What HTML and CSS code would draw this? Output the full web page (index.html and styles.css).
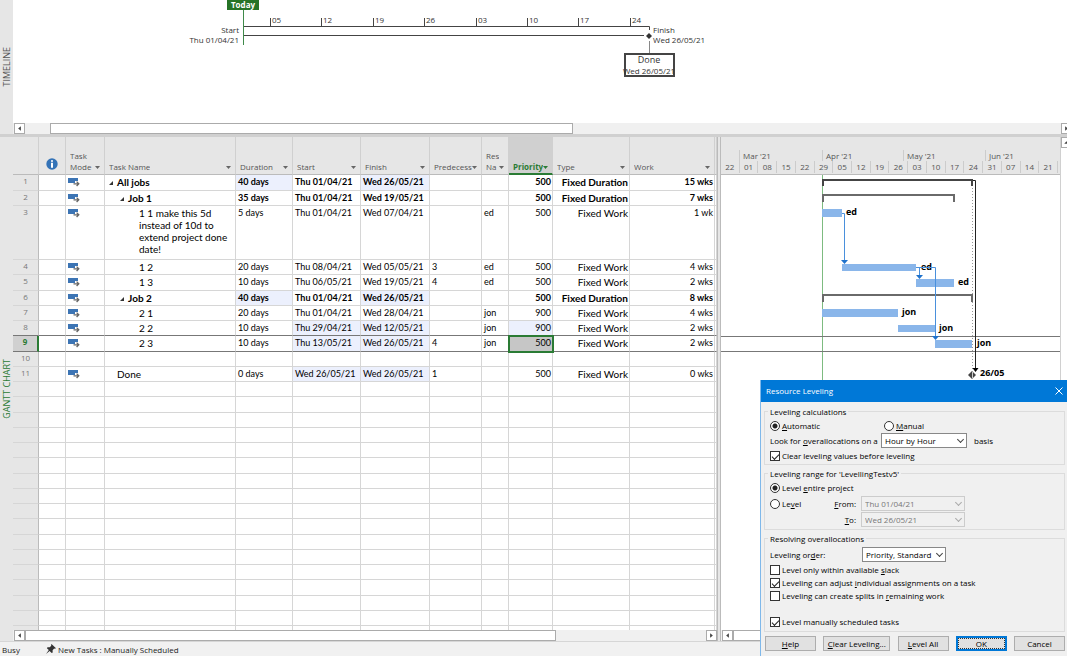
FILE: index.html
```html
<!DOCTYPE html>
<html lang="en">
<head>
    <meta charset="UTF-8">
    <meta name="viewport" content="width=device-width, initial-scale=1.0">
    <title>Project - Gantt Chart</title>
    <link rel="stylesheet" href="styles.css">
</head>
<body>
    <svg class="defs" aria-hidden="true">
        <symbol id="icon-mode" viewBox="0 0 12 10">
            <path fill="#3c74b4" d="M0 1h10v3H7v2H0z"/>
            <path fill="none" stroke="#666" stroke-width="1.3" d="M5.5 6.8h5M8.6 4.6l2.2 2.2-2.2 2.2"/>
        </symbol>
        <symbol id="icon-info" viewBox="0 0 12 12">
            <circle cx="6" cy="6" r="5.7" fill="#3473b7"/>
            <path fill="#fff" d="M5 2.2h2v1.6H5zM5 4.8h2v5H5z"/>
        </symbol>
        <symbol id="icon-left" viewBox="0 0 10 10"><path fill="#444" d="M6.5 2.5v5L3.5 5z"/></symbol>
        <symbol id="icon-right" viewBox="0 0 10 10"><path fill="#444" d="M3.5 2.5v5l3-2.5z"/></symbol>
        <symbol id="icon-up" viewBox="0 0 10 10"><path fill="#444" d="M2.5 6.5h5L5 3.5z"/></symbol>
    </svg>

    <div class="app">
        <section class="timeline">
            <div class="side-label"><span>TIMELINE</span></div>
            <div class="timeline-main">
                <svg class="timeline-canvas" id="timeline">
                    <rect x="214" y="0" width="32" height="10" fill="#267326"/>
                    <text class="today" x="230" y="8">Today</text>
                    <path class="rule" d="M230 26.5H636.5V30M230 35.5H631"/>
                    <path class="rule green" d="M230.5 10V45"/>
                    <g id="ticks"></g>
                    <text x="226" y="33" text-anchor="end">Start</text>
                    <text x="226" y="43" text-anchor="end">Thu 01/04/21</text>
                    <path fill="#333" d="M636 33l3 3-3 3-3-3z"/>
                    <text x="640" y="33">Finish</text>
                    <text x="640" y="43">Wed 26/05/21</text>
                    <path class="rule thin" d="M636.5 41V53"/>
                    <rect class="done-box" x="612" y="54" width="49" height="22"/>
                    <text class="done" x="636" y="63">Done</text>
                    <text x="636" y="74" text-anchor="middle">Wed 26/05/21</text>
                </svg>
                <div class="hscroll">
                    <button type="button" class="arrow" aria-label="Scroll left"><svg><use href="#icon-left"/></svg></button>
                    <div class="track"><div class="thumb thumb-timeline"></div></div>
                    <button type="button" class="arrow" aria-label="Scroll right"><svg><use href="#icon-right"/></svg></button>
                </div>
            </div>
        </section>

        <section class="main">
            <div class="side-label side-green"><span>GANTT CHART</span></div>

            <div class="sheet">
                <div class="sheet-body">
                    <table>
                        <colgroup>
                            <col class="c-num"><col class="c-info"><col class="c-mode"><col class="c-name">
                            <col class="c-dur"><col class="c-start"><col class="c-finish"><col class="c-pred">
                            <col class="c-res"><col class="c-pri"><col class="c-type"><col class="c-work"><col>
                        </colgroup>
                        <thead>
                            <tr>
                                <th></th>
                                <th><svg class="info"><use href="#icon-info"/></svg></th>
                                <th><div class="head"><span>Task Mode</span><button type="button" aria-label="Task Mode menu"></button></div></th>
                                <th><div class="head"><span>Task Name</span><button type="button" aria-label="Task Name menu"></button></div></th>
                                <th><div class="head"><span>Duration</span><button type="button" aria-label="Duration menu"></button></div></th>
                                <th><div class="head"><span>Start</span><button type="button" aria-label="Start menu"></button></div></th>
                                <th><div class="head"><span>Finish</span><button type="button" aria-label="Finish menu"></button></div></th>
                                <th><div class="head"><span>Predecess</span><button type="button" aria-label="Predecessors menu"></button></div></th>
                                <th><div class="head"><span>Res<br>Na</span><button type="button" aria-label="Resource Names menu"></button></div></th>
                                <th class="active"><div class="head"><span>Priority</span><button type="button" aria-label="Priority menu"></button></div></th>
                                <th><div class="head"><span>Type</span><button type="button" aria-label="Type menu"></button></div></th>
                                <th><div class="head"><span>Work</span><button type="button" aria-label="Work menu"></button></div></th>
                                <th></th>
                            </tr>
                        </thead>
                        <tbody id="tasks"></tbody>
                    </table>
                </div>
                <div class="hscroll">
                    <button type="button" class="arrow" aria-label="Scroll left"><svg><use href="#icon-left"/></svg></button>
                    <div class="track"><div class="thumb thumb-sheet"></div></div>
                    <button type="button" class="arrow" aria-label="Scroll right"><svg><use href="#icon-right"/></svg></button>
                </div>
            </div>

            <div class="splitter"></div>

            <div class="gantt">
                <div class="scale">
                    <div class="months"><span></span><span>Mar '21</span><span>Apr '21</span><span>May '21</span><span>Jun '21</span></div>
                    <div class="weeks" id="weeks"></div>
                </div>
                <svg class="chart">
                    <path class="today-line" d="M101.5 0V500"/>
                    <path class="selected-line" d="M0 161.5H340M0 176.5H340"/>
                    <path class="dotted" d="M251.5 4V196"/>
                    <g class="summary">
                        <path class="dark" d="M102 11V5H251V11"/>
                        <path d="M102 27V20H233V27"/>
                        <path d="M102 127V120H251V127"/>
                    </g>
                    <g class="bars">
                        <rect x="101" y="34" width="20" height="8"/>
                        <rect x="121" y="89" width="74" height="7"/>
                        <rect x="195" y="104" width="38" height="8"/>
                        <rect x="101" y="134" width="76" height="8"/>
                        <rect x="177" y="150" width="37" height="7"/>
                        <rect x="214" y="165" width="37" height="8"/>
                    </g>
                    <g class="labels">
                        <text x="125" y="40">ed</text>
                        <text x="200" y="95">ed</text>
                        <text x="237" y="110">ed</text>
                        <text x="181" y="140">jon</text>
                        <text x="218" y="156">jon</text>
                        <text x="256" y="171">jon</text>
                        <text x="259" y="201">26/05</text>
                    </g>
                    <path class="link" d="M121 38.5H123.5V86M195 92.5H214.5V162M198.5 92.5V101"/>
                    <path class="link-head" d="M120 85h7l-3.5 4zM195 100h7l-3.5 4zM211 161h7l-3.5 4z"/>
                    <path class="link-end" d="M252 5.5H254.5V194"/>
                    <path d="M251.5 193h6l-3 4z"/>
                    <path fill="#444" d="M251 196l4 4-4 4-4-4z"/>
                    <path stroke="#ccc" d="M251.5 197V203"/>
                </svg>
                <div class="hscroll">
                    <button type="button" class="arrow" aria-label="Scroll left"><svg><use href="#icon-left"/></svg></button>
                    <div class="track"><div class="thumb thumb-gantt"></div></div>
                </div>
            </div>

            <div class="vscroll">
                <button type="button" class="arrow" aria-label="Scroll up"><svg><use href="#icon-up"/></svg></button>
            </div>
        </section>

        <footer class="status">
            <span class="state">Busy</span>
            <svg viewBox="0 0 10 10"><path fill="#333" d="M5.5 0L10 4.2 8.8 4.8 8.2 4.6 6.6 6.3 6.7 8.5 5.7 9 3.6 6.9 0 10 2.8 6.1.9 4.2 1.5 3.2 3.7 3.3 5.3 1.7 5 1z"/></svg>
            <span>New Tasks : Manually Scheduled</span>
        </footer>
    </div>

    <form class="dialog" role="dialog" aria-labelledby="dialog-title">
        <div class="dialog-title">
            <span id="dialog-title">Resource Leveling</span>
            <button type="button" aria-label="Close"><svg viewBox="0 0 8 8"><path stroke="#fff" d="M.5.5l7 7M7.5.5l-7 7"/></svg></button>
        </div>
        <div class="dialog-body">
            <fieldset class="calc">
                <legend>Leveling calculations</legend>
                <div class="line">
                    <label class="half"><input type="radio" name="mode" checked><u>A</u>utomatic</label>
                    <label><input type="radio" name="mode"><u>M</u>anual</label>
                </div>
                <div class="line">
                    <label class="look" for="basis">Look for <u>o</u>verallocations on a</label>
                    <span class="pick w-basis"><select id="basis"><option>Hour by Hour</option></select></span>
                    <span class="basis">basis</span>
                </div>
                <div class="line"><label><input type="checkbox" checked>Clear levelin<u>g</u> values before leveling</label></div>
            </fieldset>

            <fieldset class="range">
                <legend>Leveling range for 'LevellingTestv5'</legend>
                <div class="line"><label><input type="radio" name="range" checked>Level <u>e</u>ntire project</label></div>
                <div class="line">
                    <label><input type="radio" name="range">Le<u>v</u>el</label>
                    <label class="date-label" for="from"><u>F</u>rom:</label>
                    <span class="pick w-date off"><select id="from" disabled><option>Thu 01/04/21</option></select></span>
                </div>
                <div class="line">
                    <label class="date-label" for="to"><u>T</u>o:</label>
                    <span class="pick w-date off"><select id="to" disabled><option>Wed 26/05/21</option></select></span>
                </div>
            </fieldset>

            <fieldset class="resolve">
                <legend>Resolving overallocations</legend>
                <div class="line order">
                    <label class="order-label" for="order">Leveling or<u>d</u>er:</label>
                    <span class="pick w-order"><select id="order"><option>Priority, Standard</option></select></span>
                </div>
                <div class="line"><label><input type="checkbox">Level only within available <u>s</u>lack</label></div>
                <div class="line"><label><input type="checkbox" checked>Leveling can adjust <u>i</u>ndividual assignments on a task</label></div>
                <div class="line"><label><input type="checkbox">Leveling can create splits in <u>r</u>emaining work</label></div>
                <div class="line last"><label><input type="checkbox" checked>Level manually scheduled tasks</label></div>
            </fieldset>

            <div class="buttons">
                <button type="button"><u>H</u>elp</button>
                <button type="button" class="wide"><u>C</u>lear Leveling...</button>
                <button type="button"><u>L</u>evel All</button>
                <button type="button" class="default">OK</button>
                <button type="button">Cancel</button>
            </div>
        </div>
    </form>

    <script src="script.js"></script>
</body>
</html>
```

FILE: styles.css
```css
* {
    box-sizing: border-box;
}

body {
    margin: 0;
    height: 100vh;
    overflow: hidden;
    font-family: "Open Sans", "Noto Sans", sans-serif;
    font-size: 8px;
    color: #222;
    background: #fff;
}

button {
    font: inherit;
    color: inherit;
    margin: 0;
    padding: 0;
}

.defs {
    display: none;
}

.app {
    display: flex;
    flex-direction: column;
    height: 100vh;
}

.side-label {
    flex: 0 0 13px;
    display: flex;
    align-items: center;
    justify-content: center;
    background: #e6e6e6;
    color: #555;
    font-size: 9px;
}

.side-label span {
    writing-mode: vertical-rl;
    transform: rotate(180deg);
    line-height: 12px;
}

.side-green {
    color: #2a7b34;
}

/* timeline */

.timeline {
    display: flex;
    height: 137px;
    border-bottom: 3px solid #d0d0d0;
}

.timeline-main {
    flex: 1;
    display: flex;
    flex-direction: column;
    min-width: 0;
    overflow: hidden;
}

.timeline-main .hscroll {
    margin-right: -5px;
}

.timeline-canvas {
    flex: 1;
    width: 100%;
    min-height: 0;
}

.timeline-canvas text {
    fill: #333;
}

.timeline-canvas .today {
    fill: #fff;
    font-weight: bold;
    text-anchor: middle;
}

.timeline-canvas .done {
    font-size: 9px;
    text-anchor: middle;
}

.rule {
    fill: none;
    stroke: #444;
}

.rule.green {
    stroke: #3f8a4a;
}

.rule.thin {
    stroke: #888;
}

.done-box {
    fill: #fff;
    stroke: #444;
    stroke-width: 2;
}

/* scroll bars */

.hscroll {
    flex: 0 0 11px;
    display: flex;
    padding-left: 1px;
    background: #f0f0f0;
}

.arrow {
    width: 11px;
    height: 11px;
    flex: none;
    border: 1px solid #ababab;
    background: #fff;
}

.arrow svg {
    display: block;
    width: 9px;
    height: 9px;
}

.track {
    flex: 1;
    min-width: 0;
}

.thumb {
    height: 11px;
    border: 1px solid #ababab;
    background: #fff;
}

.thumb-timeline {
    width: 50.5%;
    margin-left: 25px;
}

.thumb-sheet {
    width: 78%;
}

.thumb-gantt {
    width: 60%;
}

.vscroll {
    flex: 0 0 7px;
    overflow: hidden;
    border-left: 1px solid #d0d0d0;
    background: #fff;
}

/* task sheet */

.main {
    flex: 1;
    display: flex;
    min-height: 0;
}

.sheet {
    flex: 0 0 704px;
    display: flex;
    flex-direction: column;
    min-width: 0;
}

.sheet-body {
    flex: 1;
    min-height: 0;
    overflow: hidden;
}

table {
    width: 100%;
    table-layout: fixed;
    border-collapse: separate;
    border-spacing: 0;
}

.c-num { width: 26px; }
.c-info { width: 27px; }
.c-mode { width: 39px; }
.c-name { width: 131px; }
.c-dur { width: 57px; }
.c-start { width: 68px; }
.c-finish { width: 69px; }
.c-pred { width: 52px; }
.c-res { width: 27px; }
.c-pri { width: 44px; }
.c-type { width: 77px; }
.c-work { width: 85px; }

th {
    height: 38px;
    padding: 0 4px 2px;
    vertical-align: bottom;
    text-align: left;
    font-weight: normal;
    line-height: 11px;
    color: #555;
    background: #e6e6e6;
    border-right: 1px solid #d0d0d0;
    border-bottom: 1px solid #bbb;
}

th:first-child,
th:last-child {
    padding: 0;
}

.head {
    display: flex;
    align-items: flex-end;
    justify-content: space-between;
}

.head span {
    overflow: hidden;
}

.head button {
    flex: none;
    width: 5px;
    height: 3px;
    margin-bottom: 3px;
    border: 0;
    background: #666;
    clip-path: polygon(0 0, 100% 0, 50% 100%);
}

th.active {
    background: #d0d0d0;
    color: #2a7b34;
    font-weight: bold;
    border-bottom: 2px solid #2a7b34;
    padding-bottom: 1px;
}

th.active button {
    background: #2a7b34;
}

.info {
    display: block;
    width: 12px;
    height: 12px;
    margin: 0 auto 2px;
}

td {
    height: 15px;
    padding: 1px 2px 0;
    vertical-align: top;
    font-family: Lato, "Noto Sans", sans-serif;
    font-size: 9px;
    line-height: 12px;
    color: #000;
    white-space: nowrap;
    border-right: 1px solid #d6d6d6;
    border-bottom: 1px solid #d6d6d6;
}

td:last-child {
    padding: 0;
}

tr:nth-child(4n+1) td {
    height: 16px;
}

tr.tall td {
    height: 54px;
    white-space: normal;
}

tr.bold td {
    font-weight: bold;
}

td.level-0,
td.level-1,
td.level-2,
td.level-done,
td.type {
    font-size: 10px;
}

tbody tr .num {
    padding-top: 0;
    text-align: center;
    font-family: "Open Sans", "Noto Sans", sans-serif;
    font-size: 8px;
    color: #777;
    background: #e6e6e6;
    border-right: 1px solid #bbb;
}

tr.bold .num {
    font-weight: normal;
}

.mode svg {
    display: block;
    width: 12px;
    height: 10px;
    margin-top: 1px;
}

td.right {
    text-align: right;
    padding-right: 1px;
}

td.changed {
    background: #ecf0fd;
}

td.level-0 { padding-left: 4px; }
td.level-1 { padding-left: 15px; }
td.level-2 { padding-left: 34px; }
td.level-done { padding-left: 12px; }

.level-0::before,
.level-1::before {
    content: "";
    display: inline-block;
    width: 4px;
    height: 4px;
    margin: 0 4px 1px 0;
    background: #333;
    clip-path: polygon(100% 0, 100% 100%, 0 100%);
}

tr.before-selected td,
tr.selected td {
    border-bottom-color: #777;
}

tr.selected .num {
    color: #2a7b34;
    font-weight: bold;
    background: #d0d0d0;
    border-right: 2px solid #2a7b34;
}

td.cursor {
    background: #c6c6c6;
    outline: 2px solid #2a7b34;
    outline-offset: -1px;
}

.splitter {
    flex: 0 0 4px;
    background: #e6e6e6;
    border-left: 1px solid #bbb;
    border-right: 1px solid #bbb;
}

/* gantt chart */

.gantt {
    flex: 1;
    display: flex;
    flex-direction: column;
    min-width: 0;
}

.scale {
    flex: 0 0 38px;
    display: flex;
    flex-direction: column;
    justify-content: flex-end;
    padding-right: 2px;
    color: #555;
    background: #e6e6e6;
    border-bottom: 1px solid #bbb;
}

.months {
    display: grid;
    grid-template-columns: 18fr 83fr 81fr 82fr 73fr;
    line-height: 11px;
}

.months span + span {
    padding-left: 3px;
    border-left: 1px solid #ccc;
}

.weeks {
    display: grid;
    grid-template-columns: repeat(18, 1fr);
    padding-bottom: 1px;
    line-height: 12px;
    text-align: center;
}

.weeks span {
    border-right: 1px solid #ccc;
}

.chart {
    flex: 1;
    width: 100%;
    min-height: 0;
}

.today-line {
    stroke: #7dbb80;
}

.selected-line {
    stroke: #777;
}

.dotted {
    stroke: #999;
    stroke-dasharray: 1 2;
}

.summary path {
    fill: none;
    stroke: #6a6a6a;
    stroke-width: 2;
}

.summary .dark {
    stroke: #444;
}

.bars {
    fill: #8ab6ea;
}

.labels {
    fill: #000;
    font-size: 9px;
    font-weight: bold;
}

.link {
    fill: none;
    stroke: #4a90dc;
}

.link-head {
    fill: #1f72cc;
}

.link-end {
    fill: none;
    stroke: #222;
}

/* status bar */

.status {
    flex: 0 0 15px;
    display: flex;
    align-items: center;
    padding-left: 2px;
    background: #f1f1f1;
    border-top: 1px solid #d6d6d6;
}

.status .state {
    width: 44px;
}

.status svg {
    width: 10px;
    height: 10px;
    margin-right: 2px;
}

/* resource leveling dialog */

.dialog {
    position: fixed;
    right: 0;
    bottom: 0;
    width: 307px;
    margin: 0;
    color: #000;
    background: #f0f0f0;
    border-left: 1px solid #7fb8ea;
}

.dialog-title {
    display: flex;
    align-items: center;
    justify-content: space-between;
    height: 22px;
    padding: 0 4px 1px 5px;
    color: #fff;
    background: #0078d7;
}

.dialog-title button {
    width: 8px;
    height: 8px;
    border: 0;
    background: none;
}

.dialog-title svg {
    display: block;
}

.dialog-body {
    padding: 4px 2px 5px 3px;
}

fieldset {
    min-width: 0;
    margin: 0 0 3px;
    padding: 1px 5px;
    border: 1px solid #dcdcdc;
}

legend {
    margin-left: -2px;
    padding: 0 2px;
    line-height: 11px;
}

.line {
    display: flex;
    align-items: center;
    height: 15px;
}

.line label {
    display: flex;
    align-items: center;
    white-space: pre;
}

.half {
    width: 114px;
}

.look {
    width: 111px;
}

.basis {
    margin-left: 7px;
}

.range .line + .line {
    margin-top: 1px;
}

.range {
    padding-bottom: 2px;
}

.line .date-label {
    flex: 0 0 auto;
    margin-left: auto;
    margin-right: 5px;
}

.range .w-date {
    margin-right: 94px;
}

.resolve {
    padding: 3px 5px;
}

.resolve .line {
    height: 13px;
}

.resolve .order {
    height: 15px;
    margin-bottom: 1px;
}

.resolve .last {
    margin-top: 13px;
}

.order-label {
    width: 92px;
}

input {
    appearance: none;
    flex: none;
    width: 10px;
    height: 10px;
    margin: 0 2px 0 0;
    border: 1px solid #333;
    background: #fff;
}

input[type="radio"] {
    border-radius: 50%;
}

input[type="radio"]:checked {
    background: radial-gradient(circle, #222 2px, #fff 3px);
}

input[type="checkbox"]:checked::before {
    content: "";
    display: block;
    width: 6px;
    height: 3px;
    margin: 2px 1px;
    border-left: 1px solid #222;
    border-bottom: 1px solid #222;
    transform: rotate(-45deg);
}

.pick {
    position: relative;
    height: 15px;
}

.pick::after {
    content: "";
    position: absolute;
    right: 4px;
    top: 4px;
    width: 4px;
    height: 4px;
    border-right: 1px solid #444;
    border-bottom: 1px solid #444;
    transform: rotate(45deg);
    pointer-events: none;
}

.pick select {
    display: block;
    appearance: none;
    width: 100%;
    height: 15px;
    padding: 0 3px;
    border: 1px solid #888;
    border-radius: 0;
    font: inherit;
    color: #000;
    background: #fff;
}

.pick.off select {
    color: #777;
    background: #f0f0f0;
    border-color: #ccc;
    opacity: 1;
}

.pick.off::after {
    border-color: #aaa;
}

.w-basis { width: 86px; }
.w-date { width: 104px; }
.w-order { width: 84px; }

.buttons {
    display: flex;
    justify-content: space-between;
    padding: 1px 0 0 1px;
}

.buttons button {
    width: 51px;
    height: 15px;
    border: 1px solid #adadad;
    background: #e1e1e1;
}

.buttons .wide {
    width: 67px;
}

.buttons .default {
    border: 2px solid #0078d7;
    outline: 1px dotted #333;
    outline-offset: -3px;
}
```

FILE: script.js
```js
// name, level, duration, start, finish, pred, resource, priority, type, work, changed cells
const tasks = [
    ["All jobs", "level-0", "40 days", "Thu 01/04/21", "Wed 26/05/21", "", "", "500", "Fixed Duration", "15 wks", [2, 4]],
    ["Job 1", "level-1", "35 days", "Thu 01/04/21", "Wed 19/05/21", "", "", "500", "Fixed Duration", "7 wks", []],
    ["1 1 make this 5d instead of 10d to extend project done date!", "level-2", "5 days", "Thu 01/04/21", "Wed 07/04/21", "", "ed", "500", "Fixed Work", "1 wk", []],
    ["1 2", "level-2", "20 days", "Thu 08/04/21", "Wed 05/05/21", "3", "ed", "500", "Fixed Work", "4 wks", []],
    ["1 3", "level-2", "10 days", "Thu 06/05/21", "Wed 19/05/21", "4", "ed", "500", "Fixed Work", "2 wks", []],
    ["Job 2", "level-1", "40 days", "Thu 01/04/21", "Wed 26/05/21", "", "", "500", "Fixed Duration", "8 wks", [2, 4]],
    ["2 1", "level-2", "20 days", "Thu 01/04/21", "Wed 28/04/21", "", "jon", "900", "Fixed Work", "4 wks", []],
    ["2 2", "level-2", "10 days", "Thu 29/04/21", "Wed 12/05/21", "", "jon", "900", "Fixed Work", "2 wks", [3, 4, 7]],
    ["2 3", "level-2", "10 days", "Thu 13/05/21", "Wed 26/05/21", "4", "jon", "500", "Fixed Work", "2 wks", [3, 4]],
    null,
    ["Done", "level-done", "0 days", "Wed 26/05/21", "Wed 26/05/21", "1", "", "500", "Fixed Work", "0 wks", [3, 4]]
];

const ROWS = 28;
const SELECTED = 9;
const body = document.getElementById("tasks");

for (let n = 1; n <= ROWS; n++) {
    const task = tasks[n - 1];
    const row = body.insertRow();
    const num = row.insertCell();
    num.className = "num";
    num.textContent = n <= tasks.length ? n : "";
    row.insertCell();
    const mode = row.insertCell();
    mode.className = "mode";

    if (task) {
        mode.innerHTML = '<svg><use href="#icon-mode"/></svg>';
        if (task[8] === "Fixed Duration") row.classList.add("bold");
        if (n === 3) row.classList.add("tall");
    }
    if (n === SELECTED) row.classList.add("selected");
    if (n === SELECTED - 1) row.classList.add("before-selected");

    [0, 2, 3, 4, 5, 6, 7, 8, 9].forEach((i) => {
        const cell = row.insertCell();
        if (!task) return;
        cell.textContent = task[i];
        if (i === 0) cell.className = task[1];
        if (i === 8) cell.classList.add("type");
        if (i >= 7) cell.classList.add("right");
        if (task[10].includes(i)) cell.classList.add("changed");
        if (n === SELECTED && i === 7) cell.classList.add("cursor");
    });
    row.insertCell();
}

const weeks = ["22", "01", "08", "15", "22", "29", "05", "12", "19", "26", "03", "10", "17", "24", "31", "07", "14", "21"];
document.getElementById("weeks").innerHTML = weeks.map((w) => `<span>${w}</span>`).join("");

const ticks = ["05", "12", "19", "26", "03", "10", "17", "24"];
document.getElementById("ticks").innerHTML = ticks.map((t, i) => {
    const x = Math.round(257 + i * 51.4);
    return `<path class="rule" d="M${x + 0.5} 18V26"/><text x="${x + 2}" y="23">${t}</text>`;
}).join("");
```
